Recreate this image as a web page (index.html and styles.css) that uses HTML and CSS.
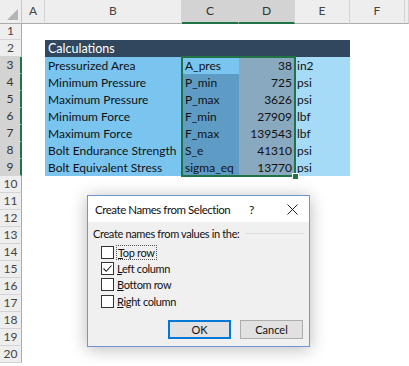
FILE: index.html
```html
<!DOCTYPE html>
<html lang="en">
<head>
    <meta charset="UTF-8">
    <title>Create Names from Selection</title>
    <link rel="stylesheet" href="styles.css">
</head>
<body>

<div class="sheet">
    <div class="row head">
        <div class="corner"><span class="tri"></span></div>
        <div class="ch">A</div>
        <div class="ch">B</div>
        <div class="ch sel">C</div>
        <div class="ch sel">D</div>
        <div class="ch">E</div>
        <div class="ch">F</div>
        <div class="ch"></div>
    </div>
    <div class="row"><div class="rh">1</div></div>
    <div class="row"><div class="rh">2</div><div></div><div class="band">Calculations</div></div>
    <div class="row">
        <div class="rh sel">3</div><div></div>
        <div class="c lab">Pressurized Area</div>
        <div class="c sym active">A_pres</div>
        <div class="c val">38</div>
        <div class="c unit">in2</div>
    </div>
    <div class="row">
        <div class="rh sel">4</div><div></div>
        <div class="c lab">Minimum Pressure</div>
        <div class="c sym">P_min</div>
        <div class="c val">725</div>
        <div class="c unit">psi</div>
    </div>
    <div class="row">
        <div class="rh sel">5</div><div></div>
        <div class="c lab">Maximum Pressure</div>
        <div class="c sym">P_max</div>
        <div class="c val">3626</div>
        <div class="c unit">psi</div>
    </div>
    <div class="row">
        <div class="rh sel">6</div><div></div>
        <div class="c lab">Minimum Force</div>
        <div class="c sym">F_min</div>
        <div class="c val">27909</div>
        <div class="c unit">lbf</div>
    </div>
    <div class="row">
        <div class="rh sel">7</div><div></div>
        <div class="c lab">Maximum Force</div>
        <div class="c sym">F_max</div>
        <div class="c val">139543</div>
        <div class="c unit">lbf</div>
    </div>
    <div class="row">
        <div class="rh sel">8</div><div></div>
        <div class="c lab">Bolt Endurance Strength</div>
        <div class="c sym">S_e</div>
        <div class="c val">41310</div>
        <div class="c unit">psi</div>
    </div>
    <div class="row">
        <div class="rh sel">9</div><div></div>
        <div class="c lab">Bolt Equivalent Stress</div>
        <div class="c sym">sigma_eq</div>
        <div class="c val">13770</div>
        <div class="c unit">psi</div>
    </div>
    <div class="row"><div class="rh">10</div></div>
    <div class="row"><div class="rh">11</div></div>
    <div class="row"><div class="rh">12</div></div>
    <div class="row"><div class="rh">13</div></div>
    <div class="row"><div class="rh">14</div></div>
    <div class="row"><div class="rh">15</div></div>
    <div class="row"><div class="rh">16</div></div>
    <div class="row"><div class="rh">17</div></div>
    <div class="row"><div class="rh">18</div></div>
    <div class="row"><div class="rh">19</div></div>
    <div class="row"><div class="rh">20</div></div>

    <div class="selection"><span class="handle"></span></div>
</div>

<div class="dialog">
    <div class="titlebar">
        <span class="title">Create Names from Selection</span>
        <span class="help">?</span>
        <span class="close">
            <svg width="11" height="11" viewBox="0 0 11 11"><path d="M0.5 0.5 L10.5 10.5 M10.5 0.5 L0.5 10.5" stroke="#222" stroke-width="1"/></svg>
        </span>
    </div>
    <div class="dlg-body">
        <div class="group">Create names from values in the:</div>
        <div class="opts">
            <label class="opt"><span class="box"></span><span class="focus"><u>T</u>op row</span></label>
            <label class="opt"><span class="box"><svg width="11" height="11" viewBox="0 0 11 11"><path d="M1.5 5.5 L4.2 8.3 L9.5 2.5" fill="none" stroke="#222" stroke-width="1.1"/></svg></span><span><u>L</u>eft column</span></label>
            <label class="opt"><span class="box"></span><span><u>B</u>ottom row</span></label>
            <label class="opt"><span class="box"></span><span><u>R</u>ight column</span></label>
        </div>
        <div class="buttons">
            <button class="btn default">OK</button>
            <button class="btn">Cancel</button>
        </div>
    </div>
</div>

</body>
</html>
```

FILE: styles.css
```css
body {
    margin: 0;
    background-color: #ffffff;
    font-family: Lato, "Liberation Sans", sans-serif;
    overflow: hidden;
}
.sheet {
    position: relative;
    width: 409px;
    height: 366px;
    overflow: hidden;
}
.row {
    display: grid;
    grid-template-columns: 22px 23px 137px 57px 56px 55px 55px 1fr;
    height: 17px;
}
.row.head {
    height: 23px;
}
.corner {
    position: relative;
    background-color: #eeeeee;
    border-right: 1px solid #c8c8c8;
    border-bottom: 1px solid #ababab;
    box-sizing: border-box;
}
.tri {
    position: absolute;
    right: 3px;
    bottom: 3px;
    width: 0;
    height: 0;
    border-left: 11px solid transparent;
    border-bottom: 11px solid #b4b4b4;
}
.ch {
    background-color: #eeeeee;
    border-right: 1px solid #d4d4d4;
    border-bottom: 1px solid #ababab;
    box-sizing: border-box;
    color: #444444;
    font-size: 12px;
    text-align: center;
    line-height: 22px;
}
.ch.sel {
    background-color: #d3d3d3;
    border-bottom: 2px solid #217346;
    color: #333333;
}
.rh {
    background-color: #eeeeee;
    border-right: 1px solid #ababab;
    border-bottom: 1px solid #d4d4d4;
    box-sizing: border-box;
    color: #444444;
    font-size: 12px;
    text-align: center;
    line-height: 16px;
}
.rh.sel {
    background-color: #d3d3d3;
    border-right: 2px solid #217346;
    color: #333333;
}
.band {
    grid-column: 3 / 7;
    background-color: #31475d;
    color: #ffffff;
    font-size: 12.5px;
    line-height: 17px;
    padding-left: 3px;
}
.c {
    font-size: 12px;
    line-height: 17px;
    color: #111111;
    white-space: nowrap;
    overflow: hidden;
}
.lab {
    background-color: #7ac5f0;
    padding-left: 3px;
}
.sym {
    background-color: #5e9cc6;
    padding-left: 3px;
}
.sym.active {
    background-color: #7ac5f0;
}
.val {
    background-color: #89a9c0;
    text-align: right;
    padding-right: 3px;
}
.unit {
    background-color: #a6dbf8;
    padding-left: 2px;
}
.selection {
    position: absolute;
    left: 181px;
    top: 56px;
    width: 115px;
    height: 121px;
    border: 2px solid #217346;
    box-sizing: border-box;
}
.handle {
    position: absolute;
    right: -5px;
    bottom: -5px;
    width: 5px;
    height: 5px;
    background-color: #217346;
    border: 1px solid #ffffff;
}
.dialog {
    position: absolute;
    left: 87px;
    top: 195px;
    width: 223px;
    height: 152px;
    box-sizing: border-box;
    border: 1px solid #6d96d3;
    background-color: #f0f0f0;
    box-shadow: 0 2px 16px rgba(0, 0, 0, 0.28);
    font-family: Lato, "Liberation Sans", sans-serif;
    font-size: 11px;
    letter-spacing: -0.35px;
    color: #111111;
}
.titlebar {
    display: flex;
    align-items: center;
    height: 26px;
    background-color: #ffffff;
    padding-left: 7px;
}
.title {
    flex: 1;
    font-size: 11.5px;
    letter-spacing: -0.45px;
}
.help {
    width: 20px;
    font-size: 12px;
    margin-right: 18px;
}
.close {
    display: flex;
    width: 22px;
}
.dlg-body {
    padding: 4px 5px 0 5px;
}
.group {
    display: flex;
    align-items: center;
    gap: 5px;
    height: 15px;
}
.group::after {
    content: "";
    flex: 1;
    border-top: 1px solid #dcdcdc;
}
.opts {
    display: flex;
    flex-direction: column;
    padding-left: 8px;
    margin-top: 3px;
}
.opt {
    display: flex;
    align-items: center;
    gap: 3px;
    height: 16.3px;
}
.box {
    width: 11px;
    height: 11px;
    border: 1px solid #333333;
    background-color: #ffffff;
    display: flex;
}
.focus {
    outline: 1px dotted #555555;
    padding: 0 1px;
}
.buttons {
    display: flex;
    justify-content: flex-end;
    gap: 9px;
    margin-top: 11px;
    padding-right: 1px;
}
.btn {
    width: 63px;
    height: 19px;
    padding: 0;
    background-color: #e1e1e1;
    border: 1px solid #adadad;
    font-family: Lato, "Liberation Sans", sans-serif;
    font-size: 11px;
    color: #111111;
}
.btn.default {
    border: 2px solid #0078d7;
}
```
